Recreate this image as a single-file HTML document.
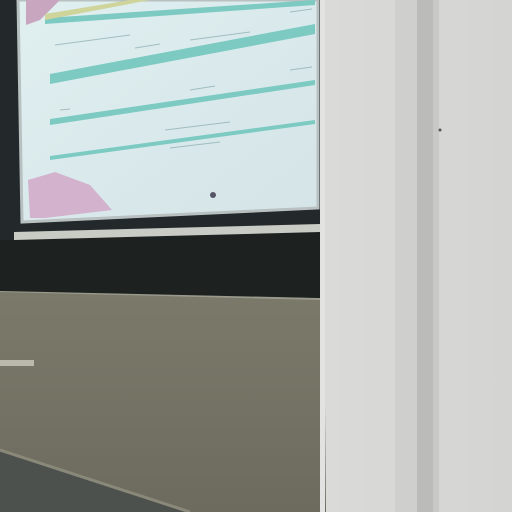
<!DOCTYPE html>
<html><head><style>
html,body{margin:0;padding:0;width:512px;height:512px;overflow:hidden;background:#cfcfcc}
</style></head><body>
<svg width="512" height="512" viewBox="0 0 512 512" xmlns="http://www.w3.org/2000/svg">
<defs>
<linearGradient id="rw" x1="0" x2="1" y1="0" y2="0">
<stop offset="0" stop-color="#d2d3d0"/><stop offset="0.5" stop-color="#dcdcda"/><stop offset="1" stop-color="#d4d4d2"/>
</linearGradient>
<linearGradient id="wall" x1="0" x2="0" y1="0" y2="1">
<stop offset="0" stop-color="#7b7a6a"/><stop offset="1" stop-color="#6d6b5e"/>
</linearGradient>
<linearGradient id="scr" x1="0" x2="1" y1="0" y2="1">
<stop offset="0" stop-color="#e0eff0"/><stop offset="1" stop-color="#d4e4e7"/>
</linearGradient>
</defs>
<rect width="512" height="512" fill="url(#rw)"/>
<rect x="0" y="0" width="325" height="300" fill="#23282a"/>
<polygon points="0,290 324,298 326,512 0,512" fill="url(#wall)"/>
<polygon points="0,450 0,512 190,512" fill="#4d514e"/>
<line x1="0" y1="450" x2="190" y2="512" stroke="#8a8878" stroke-width="3"/>
<line x1="0" y1="291" x2="320" y2="299" stroke="#9a9a8c" stroke-width="2"/>
<rect x="0" y="360" width="34" height="6" fill="#b9b9ac"/>
<polygon points="15,240 320,232 320,298 0,291 0,240" fill="#1d2221"/>
<polygon points="14,232 320,224 320,232 14,240" fill="#c9cbc5"/>
<polygon points="18,0 318,0 318,208 22,222" fill="url(#scr)" stroke="#b8c0c0" stroke-width="3"/>
<polygon points="26,0 60,0 40,20 26,25" fill="#c8a6c0"/>
<polygon points="28,180 55,172 90,185 112,210 45,218 30,218" fill="#d2b2cc"/>
<g fill="#7ccac2">
<polygon points="45,18 315,0 315,5 45,24"/>
<polygon points="50,74 315,24 315,34 50,84"/>
<polygon points="50,119 315,80 315,85 50,125"/>
<polygon points="50,156 315,120 315,124 50,160"/>
</g>
<polygon points="45,14 130,0 150,0 45,20" fill="#cfd49a"/>
<g stroke="#7aa0a4" stroke-width="1" opacity="0.6">
<line x1="55" y1="45" x2="130" y2="35"/><line x1="135" y1="48" x2="160" y2="44"/>
<line x1="190" y1="40" x2="250" y2="32"/><line x1="290" y1="12" x2="312" y2="9"/>
<line x1="60" y1="110" x2="70" y2="109"/><line x1="190" y1="90" x2="215" y2="86"/>
<line x1="165" y1="130" x2="230" y2="122"/><line x1="170" y1="148" x2="220" y2="142"/>
<line x1="290" y1="70" x2="312" y2="67"/>
</g>
<circle cx="213" cy="195" r="3" fill="#556"/>
<rect x="320" y="0" width="5" height="512" fill="#e2e2e0"/>
<rect x="395" y="0" width="22" height="512" fill="#cfd0cd"/>
<rect x="417" y="0" width="16" height="512" fill="#bbbcba"/>
<rect x="433" y="0" width="6" height="512" fill="#c8c9c6"/>
<circle cx="440" cy="130" r="1.5" fill="#555"/>
</svg>
</body></html>
